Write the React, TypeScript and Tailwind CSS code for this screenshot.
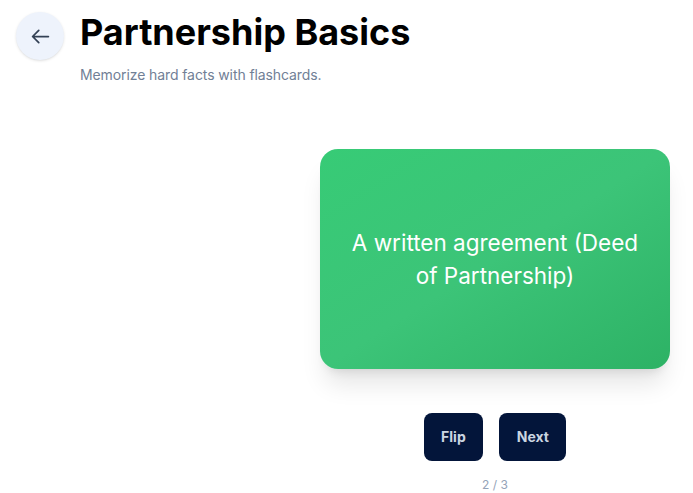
export default function App() {
  return (
    <div className="min-h-screen bg-white px-4 pt-3 font-['Inter',sans-serif]">
      <header className="flex items-start gap-4">
        <button className="flex h-12 w-12 shrink-0 items-center justify-center rounded-full bg-[#eef3fc] text-[#334155] shadow-sm">
          <svg width="21" height="21" viewBox="0 0 24 24" fill="none" stroke="currentColor" strokeWidth="2" strokeLinecap="round" strokeLinejoin="round">
            <path d="M10 19l-7-7m0 0l7-7m-7 7h18" />
          </svg>
        </button>
        <div>
          <h1 className="text-4xl leading-10 font-bold text-black">Partnership Basics</h1>
          <p className="mt-[13px] text-sm tracking-[-0.1px] text-[#718096]">Memorize hard facts with flashcards.</p>
        </div>
      </header>

      <main className="-mx-4 mt-16 flex">
        <div className="w-[297px] shrink-0" />
        <div className="flex flex-1 flex-col items-center">
          <div className="flex h-[220px] w-[350px] items-center justify-center rounded-[18px] bg-linear-to-br from-[#37cb76] via-[#3cc478] to-[#2db265] px-7 text-center shadow-xl">
            <p className="text-[22.5px] leading-[33px] text-white">A written agreement (Deed of Partnership)</p>
          </div>
          <div className="mt-11 flex gap-4">
            <button className="rounded-lg bg-[#03153a] px-[17.5px] py-3.5 text-sm leading-5 font-bold text-[#cbd5e1]">Flip</button>
            <button className="rounded-lg bg-[#03153a] px-[17.5px] py-3.5 text-sm leading-5 font-bold text-[#cbd5e1]">Next</button>
          </div>
          <p className="mt-4 text-xs text-[#94a3b8]">2 / 3</p>
        </div>
      </main>
    </div>
  );
}
